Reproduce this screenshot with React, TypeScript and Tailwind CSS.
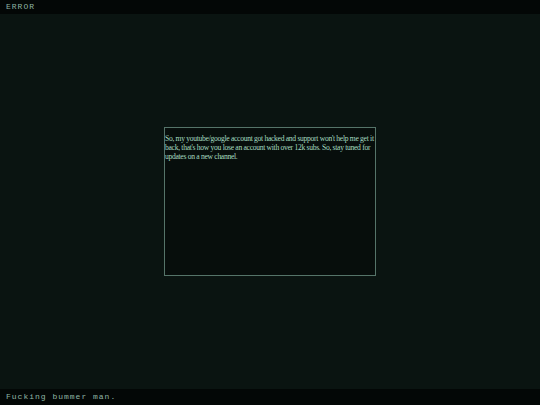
export default function App() {
  return (
    <div className="flex h-[405px] w-[540px] flex-col bg-[#0a1411]">
      <div className="flex h-[14px] items-center bg-[#030706] px-[6px] font-['Liberation_Mono',monospace] text-[8px] leading-none tracking-[1px] text-[#8fb5a5]">
        ERROR
      </div>
      <div className="flex flex-1 items-center justify-center">
        <div className="h-[149px] w-[212px] border border-[#557469] bg-[#070e0c] pl-0 pr-px pt-[6px] font-['Liberation_Serif',serif] text-[7.6px] leading-[9px] tracking-[-0.3px] text-[#a6dcc0]">
          So, my youtube/google account got hacked and support won't help me get it back, that's how you lose an account with over 12k subs. So, stay tuned for updates on a new channel.
        </div>
      </div>
      <div className="flex h-[16px] items-center bg-[#030706] px-[6px] font-['Liberation_Mono',monospace] text-[8px] leading-none tracking-[1px] text-[#8fb5a5]">
        Fucking bummer man.
      </div>
    </div>
  );
}
